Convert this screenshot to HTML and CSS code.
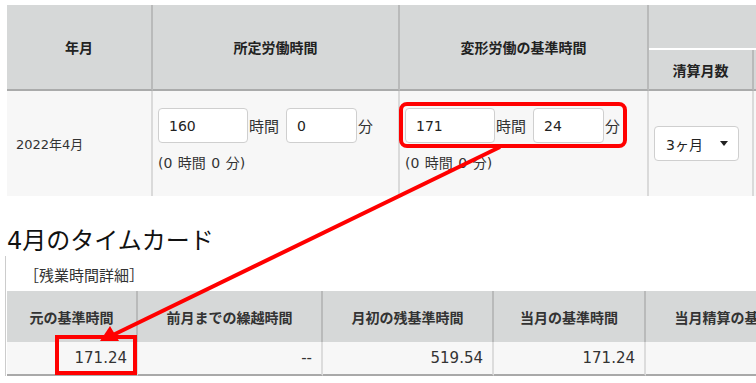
FILE: index.html
```html
<!DOCTYPE html>
<html lang="ja">
<head>
<meta charset="utf-8">
<title>タイムカード</title>
<link rel="stylesheet" href="styles.css">
</head>
<body>
<div class="page">
  <table class="plan">
    <colgroup>
      <col class="c1"><col class="c2"><col class="c3"><col class="c4"><col class="c5">
    </colgroup>
    <thead>
      <tr class="h1">
        <th rowspan="2" class="rs">年月</th>
        <th rowspan="2" class="rs">所定労働時間</th>
        <th rowspan="2" class="rs">変形労働の基準時間</th>
        <th colspan="2" class="group"></th>
      </tr>
      <tr class="h2">
        <th>清算月数</th>
        <th></th>
      </tr>
    </thead>
    <tbody>
      <tr>
        <td class="ym">2022年4月</td>
        <td class="tcell">
          <div class="time">
            <input class="field w-h" type="text" value="160" readonly>
            <span class="unit gap">時間</span>
            <input class="field w-m" type="text" value="0" readonly>
            <span class="unit">分</span>
          </div>
          <div class="note">(0 時間 0 分)</div>
        </td>
        <td class="tcell">
          <div class="time">
            <input class="field w-h" type="text" value="171" readonly>
            <span class="unit gap">時間</span>
            <input class="field w-m" type="text" value="24" readonly>
            <span class="unit">分</span>
          </div>
          <div class="note">(0 時間 0 分)</div>
        </td>
        <td class="months">
          <div class="select"><span class="sel-text">3ヶ月</span><span class="caret"></span></div>
        </td>
        <td></td>
      </tr>
    </tbody>
  </table>

  <h1 class="title">4月のタイムカード</h1>

  <div class="panel">
    <div class="panel-title">［残業時間詳細］</div>
    <table class="detail">
      <colgroup>
        <col class="d1"><col class="d2"><col class="d3"><col class="d4"><col class="d5">
      </colgroup>
      <thead>
        <tr>
          <th>元の基準時間</th>
          <th>前月までの繰越時間</th>
          <th>月初の残基準時間</th>
          <th>当月の基準時間</th>
          <th>当月精算の基準時間</th>
        </tr>
      </thead>
      <tbody>
        <tr>
          <td>171.24</td>
          <td>--</td>
          <td>519.54</td>
          <td>171.24</td>
          <td></td>
        </tr>
      </tbody>
    </table>
  </div>
</div>

<svg class="overlay" width="756" height="383" viewBox="0 0 756 383" aria-hidden="true">
  <rect x="401" y="104" width="224" height="42" rx="6" fill="none" stroke="#ff0000" stroke-width="4"/>
  <rect x="57" y="337" width="78" height="36" fill="none" stroke="#ff0000" stroke-width="4"/>
  <line x1="500" y1="147" x2="113" y2="335" stroke="#ff0000" stroke-width="4"/>
  <polygon points="100,341 110,326 119,341" fill="#ff0000"/>
</svg>
</body>
</html>
```

FILE: styles.css
```css
* { box-sizing: border-box; }

html, body {
  margin: 0;
  width: 756px;
  height: 383px;
  overflow: hidden;
  background: #fff;
}

body {
  position: relative;
  font-family: "DejaVu Sans", "Noto Sans CJK JP", sans-serif;
  color: #333;
}

.page {
  padding: 5px 0 0 5px;
}

table {
  border-collapse: separate;
  border-spacing: 0;
  table-layout: fixed;
}

/* ---------- top table ---------- */
.plan {
  margin-left: 2px;
  width: 896px;
}
.plan .c1 { width: 146px; }
.plan .c2 { width: 247px; }
.plan .c3 { width: 249px; }
.plan .c4 { width: 105px; }
.plan .c5 { width: 149px; }

.plan th {
  background: #d6d8d8;
  border-right: 2px solid #b9baba;
  font-family: "Noto Sans CJK JP", sans-serif;
  font-weight: bold;
  font-size: 14px;
  color: #222;
  text-align: center;
  vertical-align: middle;
  padding: 0;
}
.plan .h1 { height: 45px; }
.plan .h2 { height: 41px; }
.plan th.rs,
.plan .h2 th { border-bottom: 2px solid #aaabab; }
.plan th.group {
  border-right: none;
  border-bottom: 2px solid #ffffff;
}

.plan tbody tr { height: 105px; }
.plan td {
  background: #f7f7f7;
  border-right: 2px solid #dadada;
  padding: 0;
  font-size: 14px;
  vertical-align: middle;
}

.plan td.ym {
  padding-left: 9px;
  font-size: 13px;
  color: #333;
}

.plan td.tcell {
  vertical-align: top;
  padding: 17px 0 0 5px;
}

.time {
  display: flex;
  align-items: center;
}

.field {
  height: 35px;
  border: 1px solid #cfcfcf;
  border-radius: 4px;
  background: #fff;
  padding: 0 0 0 10px;
  font-family: "DejaVu Sans", sans-serif;
  font-size: 14px;
  color: #222;
  outline: none;
  margin: 0;
}
.w-h { width: 90px; }
.w-m { width: 71px; }

.unit {
  margin-left: 1px;
  font-size: 15px;
  color: #333;
  font-family: "Noto Sans CJK JP", sans-serif;
}
.unit.gap { margin-right: 7px; }

.note {
  margin-top: 10px;
  line-height: 20px;
  font-size: 14px;
  word-spacing: 1px;
  color: #333;
}

.plan td.months { padding-left: 5px; }

.select {
  width: 85px;
  height: 35px;
  border: 1px solid #cfcfcf;
  border-radius: 4px;
  background: #fff;
  display: flex;
  align-items: center;
  padding: 0 10px 0 11px;
}
.sel-text {
  font-size: 14px;
  color: #222;
}
.caret {
  margin-left: auto;
  width: 0;
  height: 0;
  border-left: 4.5px solid transparent;
  border-right: 4.5px solid transparent;
  border-top: 5px solid #222;
}

/* ---------- heading ---------- */
.title {
  margin: 31px 0 0 2px;
  font-size: 24px;
  line-height: 28px;
  font-weight: normal;
  color: #111;
}

/* ---------- detail panel ---------- */
.panel {
  margin-top: 1px;
  border-left: 1px solid #cccccc;
  padding-left: 1px;
}

.panel-title {
  height: 35px;
  padding: 8px 0 0 17px;
  font-size: 15px;
  line-height: 22px;
  color: #333;
  font-family: "Noto Sans CJK JP", sans-serif;
}

.detail { width: 824px; }
.detail .d1 { width: 131px; }
.detail .d2 { width: 185px; }
.detail .d3 { width: 171px; }
.detail .d4 { width: 152px; }
.detail .d5 { width: 185px; }

.detail th {
  height: 51px;
  background: #d6d8d8;
  border-right: 2px solid #b9baba;
  font-family: "Noto Sans CJK JP", sans-serif;
  font-weight: bold;
  font-size: 14px;
  color: #333;
  text-align: center;
  padding: 0;
  white-space: nowrap;
}

.detail td {
  height: 34px;
  background: #f7f7f7;
  border-right: 2px solid #dcdcdc;
  border-bottom: 2px solid #a9a9a9;
  text-align: right;
  padding: 0 9px 0 0;
  font-size: 15px;
  color: #333;
}

/* ---------- annotation overlay ---------- */
.overlay {
  position: absolute;
  top: 0;
  left: 0;
  pointer-events: none;
}
```
